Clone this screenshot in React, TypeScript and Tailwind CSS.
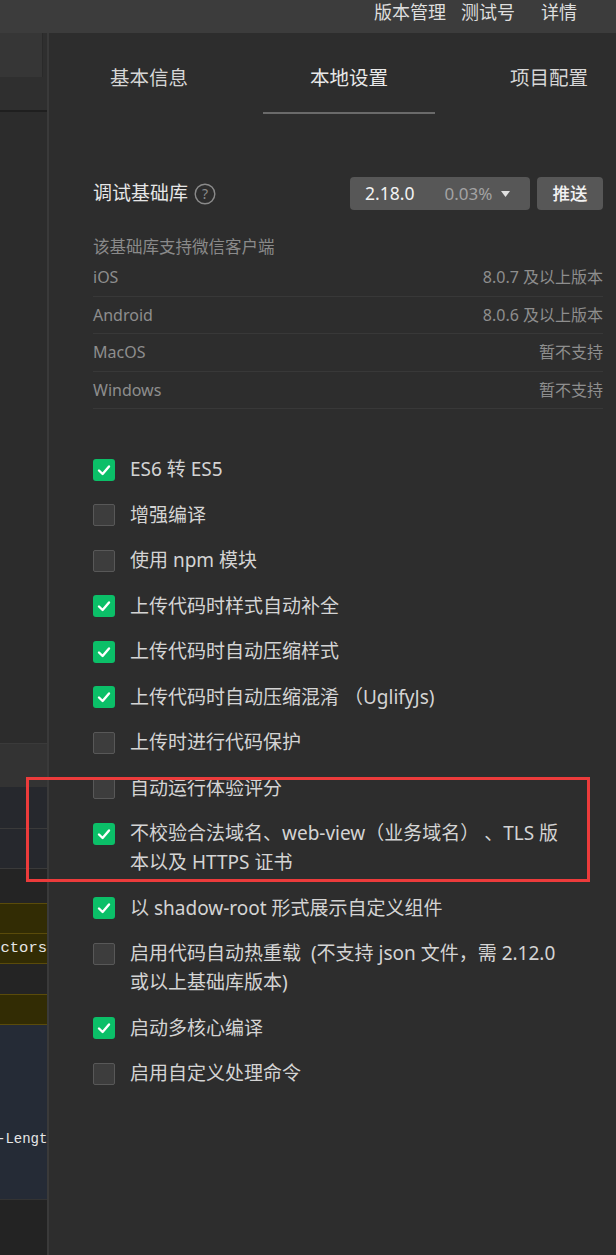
import React from "react";

type Item = { checked: boolean; lines: string[] };

const items: Item[] = [
  { checked: true, lines: ["ES6 转 ES5"] },
  { checked: false, lines: ["增强编译"] },
  { checked: false, lines: ["使用 npm 模块"] },
  { checked: true, lines: ["上传代码时样式自动补全"] },
  { checked: true, lines: ["上传代码时自动压缩样式"] },
  { checked: true, lines: ["上传代码时自动压缩混淆 （UglifyJs)"] },
  { checked: false, lines: ["上传时进行代码保护"] },
  { checked: false, lines: ["自动运行体验评分"] },
  { checked: true, lines: ["不校验合法域名、web-view（业务域名） 、TLS 版", "本以及 HTTPS 证书"] },
  { checked: true, lines: ["以 shadow-root 形式展示自定义组件"] },
  { checked: false, lines: ["启用代码自动热重载  (不支持 json 文件，需 2.12.0", "或以上基础库版本)"] },
  { checked: true, lines: ["启动多核心编译"] },
  { checked: false, lines: ["启用自定义处理命令"] },
];

const rows = [
  ["iOS", "8.0.7 及以上版本"],
  ["Android", "8.0.6 及以上版本"],
  ["MacOS", "暂不支持"],
  ["Windows", "暂不支持"],
];

function Check({ checked }: { checked: boolean }) {
  if (checked) {
    return (
      <div className="mt-[3.5px] flex h-[22px] w-[22px] shrink-0 items-center justify-center rounded-[3px] bg-[#0bbf68]">
        <svg width="22" height="22" viewBox="0 0 22 22">
          <polyline points="6,11.5 9.6,15 16,7.5" fill="none" stroke="#ffffff" strokeWidth="2.4" strokeLinecap="round" strokeLinejoin="round" />
        </svg>
      </div>
    );
  }
  return <div className="mt-[3.5px] h-[22px] w-[22px] shrink-0 rounded-[2px] border-[1.5px] border-[#585858] bg-[#3d3d3d]" />;
}

export default function App() {
  return (
    <div className="relative flex h-[1255px] w-[616px] flex-col overflow-hidden bg-[#2d2d2d] font-['Noto_Sans','Noto_Sans_CJK_SC',sans-serif]">
      {/* top bar */}
      <div className="flex h-[33px] shrink-0 items-start justify-end bg-[#3c3c3c] pr-[39px] text-[18px] leading-[24px] text-[#dedede]">
        <span>版本管理</span>
        <span className="ml-[15px]">测试号</span>
        <span className="ml-[26px]">详情</span>
      </div>

      <div className="flex flex-1">
        {/* left strip */}
        <div className="flex w-[47px] shrink-0 flex-col overflow-hidden">
          <div className="flex h-[44px]">
            <div className="w-[43px] border-r border-[#2a2a2a] bg-[#363636]" />
            <div className="flex-1 bg-[#2f2f2f]" />
          </div>
          <div className="h-[33px] bg-[#2f2f2f]" />
          <div className="h-[2px] bg-[#1f1f1f]" />
          <div className="h-[631px] bg-[#2c2c2c]" />
          <div className="h-[1px] bg-[#3a3a3a]" />
          <div className="h-[43px] bg-[#333333]" />
          <div className="h-[41px] bg-[#26282d]" />
          <div className="h-[1px] bg-[#3a3a3a]" />
          <div className="h-[39px] bg-[#26282d]" />
          <div className="h-[1px] bg-[#3a3a3a]" />
          <div className="h-[34px] bg-[#242424]" />
          <div className="h-[31px] border-y border-[#5a4b0a] bg-[#322c04]" />
          <div className="flex h-[30px] items-center justify-end overflow-hidden whitespace-nowrap border-b border-[#5a4b0a] bg-[#322c04] font-['Liberation_Mono',monospace] text-[15.5px] text-[#e6e6e6]">
            Selectors
          </div>
          <div className="h-[30px] bg-[#242424]" />
          <div className="h-[31px] border-y border-[#5a4b0a] bg-[#322c04]" />
          <div className="h-[174px] overflow-hidden whitespace-nowrap bg-[#252b36] pt-[102px] font-['Liberation_Mono',monospace] text-[14px] leading-[24px] text-[#e6e6e6]">
            <span className="ml-[-3px]">-Length</span>
          </div>
          <div className="h-[1px] bg-[#333333]" />
          <div className="flex-1 bg-[#232323]" />
        </div>

        <div className="w-[2px] shrink-0 bg-[#3a3a3a]" />

        {/* main panel */}
        <div className="flex flex-1 flex-col overflow-hidden bg-[#2d2d2d]">
          {/* tabs */}
          <div className="flex h-[81px] shrink-0">
            {["基本信息", "本地设置", "项目配置"].map((t, i) => (
              <div key={t} className="flex w-[200px] shrink-0 flex-col items-center">
                <div className={`h-[79px] pt-[30px] text-[19.5px] leading-[30px] ${i === 1 ? "text-[#e8e8e8]" : "text-[#d6d6d6]"}`}>{t}</div>
                <div className={`h-[2px] w-[172px] ${i === 1 ? "bg-[#6a6a6a]" : "bg-transparent"}`} />
              </div>
            ))}
          </div>

          <div className="flex flex-col pl-[44px] pr-[13px]">
            {/* debug lib row */}
            <div className="mt-[63px] flex h-[33px] items-center">
              <span className="text-[19px] leading-[33px] text-[#e6e6e6]">调试基础库</span>
              <svg className="ml-[6px]" width="22" height="22" viewBox="0 0 22 22">
                <circle cx="11" cy="11" r="9.8" fill="none" stroke="#8a8a8a" strokeWidth="1.4" />
                <text x="11" y="16" textAnchor="middle" fontSize="14" fill="#8a8a8a" fontFamily="Noto Sans, sans-serif">?</text>
              </svg>
              <div className="ml-auto flex h-[33px] w-[180px] items-center rounded-[4px] bg-[#575757] pl-[15px]">
                <span className="text-[17.5px] text-[#f2f2f2]">2.18.0</span>
                <span className="ml-[30px] text-[17px] text-[#a3a3a3]">0.03%</span>
                <svg className="ml-[9px]" width="9" height="6" viewBox="0 0 9 6">
                  <polygon points="0,0 9,0 4.5,6" fill="#e0e0e0" />
                </svg>
              </div>
              <div className="ml-[7px] flex h-[33px] w-[66px] items-center justify-center rounded-[4px] bg-[#575757] text-[17.5px] font-medium text-[#f2f2f2]">
                推送
              </div>
            </div>

            <div className="mt-[25px] text-[16.5px] leading-[24px] text-[#8a8a8a]">该基础库支持微信客户端</div>
            {rows.map(([a, b]) => (
              <div key={a} className="flex h-[37.5px] items-center justify-between border-b border-[#383838] text-[16px] text-[#8e8e8e]">
                <span>{a}</span>
                <span>{b}</span>
              </div>
            ))}

            {/* checkbox list */}
            <div className="mt-[46px] flex flex-col gap-[16.5px]">
              {items.map((it, i) => (
                <div key={i} className="flex items-start">
                  <Check checked={it.checked} />
                  <div className="ml-[15px] whitespace-pre text-[19px] leading-[29px] text-[#d4d4d4]">
                    {it.lines.map((l, j) => (
                      <div key={j}>{l}</div>
                    ))}
                  </div>
                </div>
              ))}
            </div>
          </div>
        </div>
      </div>

      {/* red highlight */}
      <div className="pointer-events-none absolute left-[26px] top-[777px] h-[105px] w-[564px] border-[3px] border-[#ec3b3b]" />
    </div>
  );
}
